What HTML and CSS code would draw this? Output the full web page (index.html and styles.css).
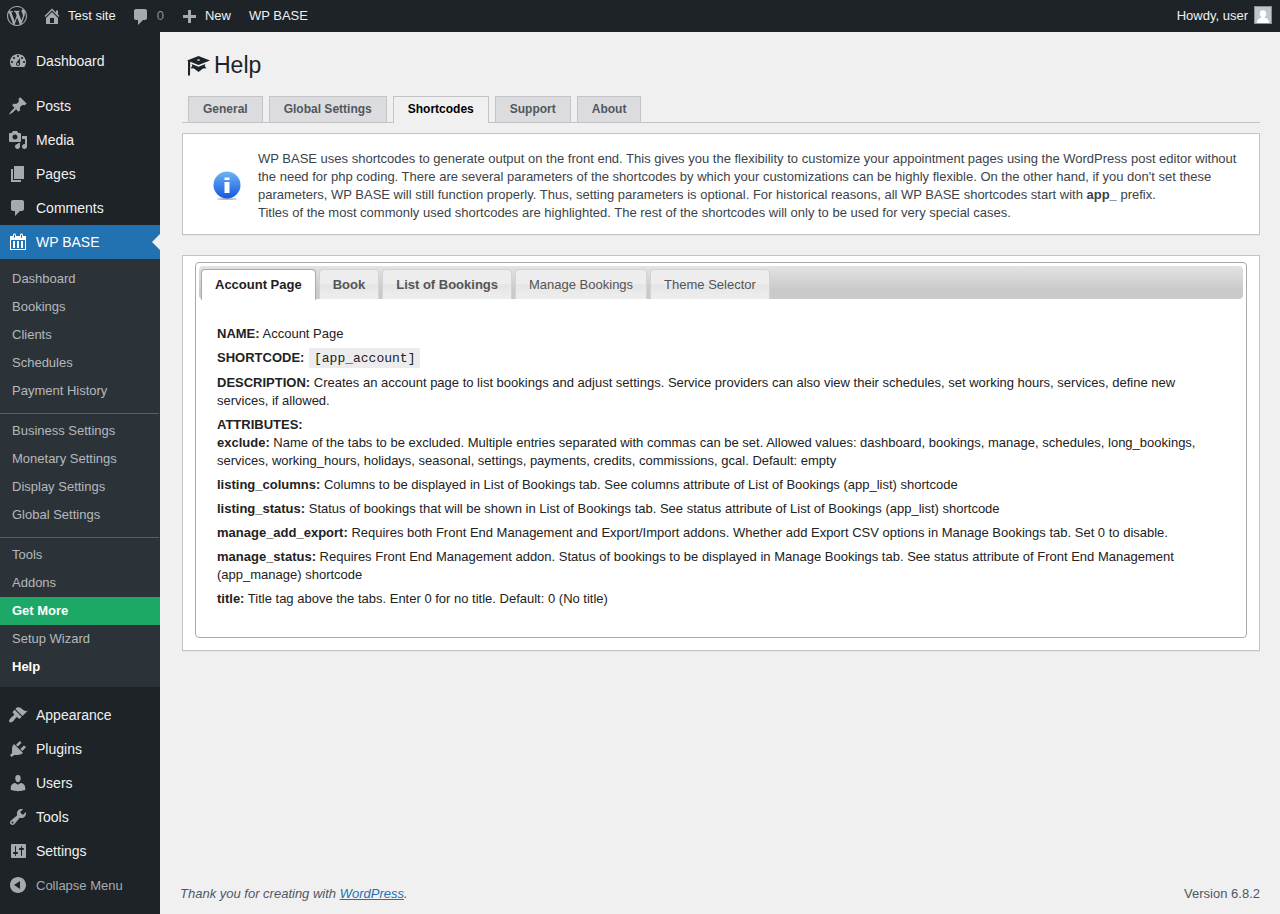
FILE: index.html
```html
<!DOCTYPE html>
<html lang="en">
<head>
<meta charset="UTF-8" />
<meta name="viewport" content="width=device-width, initial-scale=1.0"/>
<title>Help - WP BASE</title>
<link rel="stylesheet" href="styles.css">
</head>
<body>

<!-- Top admin bar -->
<header class="adminbar">
  <a href="#" class="bar-item" aria-label="About WordPress">
    <svg class="icon" viewBox="0 0 20 20"><path d="M20 10c0-5.51-4.49-10-10-10C4.48 0 0 4.49 0 10c0 5.52 4.48 10 10 10 5.51 0 10-4.48 10-10zM7.78 15.37L4.37 6.22c.55-.02 1.17-.08 1.17-.08.5-.06.44-1.13-.06-1.11 0 0-1.45.11-2.37.11-.18 0-.37 0-.58-.01C4.12 2.69 6.87 1.11 10 1.11c2.33 0 4.45.87 6.05 2.34-.68-.11-1.65.39-1.65 1.58 0 .74.45 1.36.9 2.1.35.61.55 1.36.55 2.46 0 1.49-1.4 5-1.4 5l-3.03-8.37c.54-.02.82-.17.82-.17.5-.05.44-1.25-.06-1.22 0 0-1.44.12-2.38.12-.87 0-2.33-.12-2.33-.12-.5-.03-.56 1.2-.06 1.22l.92.08 1.26 3.41zM17.41 10c.24-.64.74-1.87.43-4.25.7 1.29 1.05 2.71 1.05 4.25 0 3.29-1.73 6.24-4.4 7.78.97-2.59 1.94-5.2 2.92-7.78zM6.1 18.09C3.12 16.65 1.11 13.53 1.11 10c0-1.3.23-2.48.72-3.59C3.25 10.3 4.67 14.2 6.1 18.09zm4.03-6.63l2.58 6.98c-.86.29-1.76.45-2.71.45-.79 0-1.57-.11-2.29-.33.81-2.38 1.62-4.74 2.42-7.1z"/></svg>
  </a>
  <a href="#" class="bar-item">
    <svg class="icon" viewBox="0 0 20 20"><path d="M16 8.5l1.53 1.53-1.06 1.06L10 4.6l-6.47 6.49-1.06-1.06L10 2.5l4 4v-2h2v4zm-6-2.46l6 5.99V18H4v-5.97zM12 17v-5H8v5h4z"/></svg>
    <span>Test site</span>
  </a>
  <a href="#" class="bar-item muted">
    <svg class="icon" viewBox="0 -1 20 20"><path d="M5 2h9c1.1 0 2 .9 2 2v7c0 1.1-.9 2-2 2h-2l-5 5v-5H5c-1.1 0-2-.9-2-2V4c0-1.1.9-2 2-2z"/></svg>
    <span>0</span>
  </a>
  <a href="#" class="bar-item">
    <svg class="icon" viewBox="0 -2 20 20"><path d="M17 7v3h-5v5H9v-5H4V7h5V2h3v5h5z"/></svg>
    <span>New</span>
  </a>
  <a href="#" class="bar-item text-only">WP BASE</a>
  <a href="#" class="bar-item account">
    <span>Howdy, user</span>
    <svg class="avatar" viewBox="0 0 16 16"><rect width="16" height="16" fill="#c5c5c5"/><path fill="#fff" d="M8 3.2c2 0 3.3 1.4 3.3 3.4 0 1.5-.7 2.7-1.5 3.4v.8c2 .4 3.9 1.5 4.3 5.2H1.9c.4-3.7 2.3-4.8 4.3-5.2V10C5.4 9.3 4.7 8.1 4.7 6.6c0-2 1.3-3.4 3.3-3.4z"/></svg>
  </a>
</header>

<div class="layout">
  <!-- Admin menu -->
  <nav class="sidebar">
    <ul class="menu">
      <li><a href="#" class="menu-item"><svg class="icon" viewBox="0 0 20 20"><path d="M3.76 16h12.48c1.1-1.37 1.76-3.11 1.76-5 0-4.42-3.58-8-8-8s-8 3.58-8 8c0 1.89.66 3.63 1.76 5zM10 4c.55 0 1 .45 1 1s-.45 1-1 1-1-.45-1-1 .45-1 1-1zM6 6c.55 0 1 .45 1 1s-.45 1-1 1-1-.45-1-1 .45-1 1-1zm8 0c.55 0 1 .45 1 1s-.45 1-1 1-1-.45-1-1 .45-1 1-1zm-5.37 5.55L12 7v6c0 1.1-.9 2-2 2s-2-.9-2-2c0-.57.24-1.08.63-1.45zM4 10c.55 0 1 .45 1 1s-.45 1-1 1-1-.45-1-1 .45-1 1-1zm12 0c.55 0 1 .45 1 1s-.45 1-1 1-1-.45-1-1 .45-1 1-1zm-5 3c0-.55-.45-1-1-1s-1 .45-1 1 .45 1 1 1 1-.45 1-1z"/></svg>Dashboard</a></li>
      <li class="separator"></li>
      <li><a href="#" class="menu-item"><svg class="icon" viewBox="0 0 20 20"><path d="M10.44 3.02l1.82-1.82 6.36 6.35-1.83 1.82c-1.05-.68-2.48-.57-3.41.36l-.75.75c-.92.93-1.04 2.35-.35 3.41l-1.83 1.82-2.41-2.41-2.8 2.79c-.42.42-3.38 2.71-3.8 2.29s1.86-3.39 2.28-3.81l2.79-2.79L4.1 9.36l1.83-1.82c1.05.69 2.48.57 3.4-.36l.75-.75c.93-.92 1.05-2.35.36-3.41z"/></svg>Posts</a></li>
      <li><a href="#" class="menu-item"><svg class="icon" viewBox="0 0 20 20"><path d="M13 11V4c0-.55-.45-1-1-1h-1.67L9 1H5L3.67 3H2c-.55 0-1 .45-1 1v7c0 .55.45 1 1 1h10c.55 0 1-.45 1-1zM7 4.5c1.38 0 2.5 1.12 2.5 2.5S8.38 9.5 7 9.5 4.5 8.38 4.5 7 5.62 4.5 7 4.5zM14 6h5v10.5c0 1.38-1.12 2.5-2.5 2.5S14 17.88 14 16.5s1.12-2.5 2.5-2.5c.17 0 .34.02.5.05V9h-3V6zm-4 8.05V13h2v3.5c0 1.38-1.12 2.5-2.5 2.5S7 17.88 7 16.5 8.12 14 9.5 14c.17 0 .34.02.5.05z"/></svg>Media</a></li>
      <li><a href="#" class="menu-item"><svg class="icon" viewBox="0 0 20 20"><path d="M6 15V2h10v13H6zm-1 1h8v2H3V5h2v11z"/></svg>Pages</a></li>
      <li><a href="#" class="menu-item"><svg class="icon" viewBox="0 0 20 20"><path d="M5 2h9c1.1 0 2 .9 2 2v7c0 1.1-.9 2-2 2h-2l-5 5v-5H5c-1.1 0-2-.9-2-2V4c0-1.1.9-2 2-2z"/></svg>Comments</a></li>
      <li>
        <a href="#" class="menu-item current"><svg class="icon" viewBox="0 0 20 20"><path d="M15 4h3v14H2V4h3V3c0-.83.67-1.5 1.5-1.5S8 2.17 8 3v1h4V3c0-.83.67-1.5 1.5-1.5S15 2.17 15 3v1zM6 3v2.5c0 .28.22.5.5.5s.5-.22.5-.5V3c0-.28-.22-.5-.5-.5S6 2.72 6 3zm7 0v2.5c0 .28.22.5.5.5s.5-.22.5-.5V3c0-.28-.22-.5-.5-.5s-.5.22-.5.5zm4 14V8H3v9h14zM7 16V9H5v7h2zm4 0V9H9v7h2zm4 0V9h-2v7h2z"/></svg>WP BASE</a>
        <ul class="submenu">
          <li><a href="#">Dashboard</a></li>
          <li><a href="#">Bookings</a></li>
          <li><a href="#">Clients</a></li>
          <li><a href="#">Schedules</a></li>
          <li><a href="#">Payment History</a></li>
          <li class="divided"><a href="#">Business Settings</a></li>
          <li><a href="#">Monetary Settings</a></li>
          <li><a href="#">Display Settings</a></li>
          <li><a href="#">Global Settings</a></li>
          <li class="divided"><a href="#">Tools</a></li>
          <li><a href="#">Addons</a></li>
          <li><a href="#" class="get-more">Get More</a></li>
          <li><a href="#">Setup Wizard</a></li>
          <li><a href="#" class="active">Help</a></li>
        </ul>
      </li>
      <li class="separator"></li>
      <li><a href="#" class="menu-item"><svg class="icon" viewBox="0 0 20 20"><path d="M14.48 11.06L7.41 3.99l1.5-1.5c.5-.56 2.3-.47 3.51.32 1.21.8 1.43 1.28 2.91 2.1 1.18.64 2.45 1.26 4.45.85zm-.71.71L6.7 4.7 4.93 6.47c-.39.39-.39 1.02 0 1.41l1.06 1.06c.39.39.39 1.03 0 1.42-.6.6-1.43 1.11-2.21 1.69-.35.26-.7.53-1.01.84C1.43 14.23.4 16.08 1.4 17.07c.99 1 2.84-.03 4.18-1.36.31-.31.58-.66.85-1.02.57-.78 1.08-1.61 1.69-2.21.39-.39 1.02-.39 1.41 0l1.06 1.06c.39.39 1.02.39 1.41 0z"/></svg>Appearance</a></li>
      <li><a href="#" class="menu-item"><svg class="icon" viewBox="0 0 20 20"><path d="M13.11 4.36L9.87 7.6 8 5.73l3.24-3.24c.35-.34 1.05-.2 1.56.32.52.51.66 1.21.31 1.55zm-8 1.77l.91-1.12 9.01 9.01-1.19.84c-.71.71-2.63 1.16-3.82 1.16H6.14L4.9 17.26c-.59.59-1.54.59-2.12 0-.59-.58-.59-1.53 0-2.12l1.24-1.24v-3.88c0-1.13.4-3.19 1.09-3.89zm7.26 3.97l3.24-3.24c.34-.35 1.04-.21 1.55.31.52.51.66 1.21.31 1.55l-3.24 3.25z"/></svg>Plugins</a></li>
      <li><a href="#" class="menu-item"><svg class="icon" viewBox="0 0 20 20"><path d="M10 9.25c-2.27 0-2.73-3.44-2.73-3.44C7 4.02 7.82 2 9.97 2c2.16 0 2.98 2.02 2.71 3.81 0 0-.41 3.44-2.68 3.44zm0 2.57L12.72 10c2.39 0 4.52 2.33 4.52 4.53v2.49s-3.65 1.13-7.24 1.13c-3.65 0-7.24-1.13-7.24-1.13v-2.49c0-2.25 1.94-4.48 4.47-4.48z"/></svg>Users</a></li>
      <li><a href="#" class="menu-item"><svg class="icon" viewBox="0 0 20 20"><path d="M16.68 9.77c-1.34 1.34-3.3 1.67-4.95.99l-5.41 6.52c-.99.99-2.59.99-3.58 0s-.99-2.59 0-3.57l6.52-5.42c-.68-1.65-.35-3.61.99-4.95 1.28-1.28 3.12-1.62 4.72-1.06l-2.89 2.89 2.82 2.82 2.86-2.87c.53 1.58.18 3.39-1.08 4.65zM3.81 16.21c.4.39 1.04.39 1.43 0 .4-.4.4-1.04 0-1.43-.39-.4-1.03-.4-1.43 0-.39.39-.39 1.03 0 1.43z"/></svg>Tools</a></li>
      <li><a href="#" class="menu-item"><svg class="icon" viewBox="0 0 20 20"><path d="M18 16V4c0-.55-.45-1-1-1H4c-.55 0-1 .45-1 1v12c0 .55.45 1 1 1h13c.55 0 1-.45 1-1zM8 11h1c.55 0 1 .45 1 1s-.45 1-1 1H8v1.5c0 .28-.22.5-.5.5s-.5-.22-.5-.5V13H6c-.55 0-1-.45-1-1s.45-1 1-1h1V5.5c0-.28.22-.5.5-.5s.5.22.5.5V11zm5-2h-1c-.55 0-1-.45-1-1s.45-1 1-1h1V5.5c0-.28.22-.5.5-.5s.5.22.5.5V7h1c.55 0 1 .45 1 1s-.45 1-1 1h-1v5.5c0 .28-.22.5-.5.5s-.5-.22-.5-.5V9z"/></svg>Settings</a></li>
      <li><button type="button" class="menu-item collapse"><svg class="icon" viewBox="0 0 20 20"><path d="M10 2c4.42 0 8 3.58 8 8s-3.58 8-8 8-8-3.58-8-8 3.58-8 8-8zm2 12V6l-6 4z"/></svg>Collapse Menu</button></li>
    </ul>
  </nav>

  <div class="content">
    <main class="wrap">
      <h1 class="page-title">
        <svg class="title-icon" viewBox="0 0 23 23"><path d="M0 6.5L11.5 2 23 6.5l-11.5 4.6zM10 6a1.5.7 0 1 0 3 0 1.5.7 0 1 0-3 0z"/><path d="M1 7h2.200v4L3 21.500H1z"/><path d="M4.500 10l7 2.800 7-2.800-.8 2 1.800 2.200-3.500.3-4.500 3.500L7 14.500l-3.500-.3L5.300 12z"/></svg>
        Help
      </h1>

      <nav class="nav-tabs">
        <a href="#" class="nav-tab">General</a>
        <a href="#" class="nav-tab">Global Settings</a>
        <a href="#" class="nav-tab nav-tab-active">Shortcodes</a>
        <a href="#" class="nav-tab">Support</a>
        <a href="#" class="nav-tab">About</a>
      </nav>

      <section class="postbox info">
        <svg class="info-icon" viewBox="0 0 28 30">
          <defs>
            <linearGradient id="info-fill" x1="0" y1="0" x2="0" y2="1">
              <stop offset="0" stop-color="#6db4f5"/>
              <stop offset="1" stop-color="#1458de"/>
            </linearGradient>
          </defs>
          <ellipse cx="14" cy="28" rx="10" ry="1" fill="#bbb"/>
          <circle cx="14" cy="14" r="13.5" fill="url(#info-fill)"/>
          <path fill="#fff" d="M11.5 6.5h5V9h-5zM11.5 11h5v11h-5z"/>
        </svg>
        <div class="info-text">
          WP BASE uses shortcodes to generate output on the front end. This gives you the flexibility to customize your appointment pages using the WordPress post editor without the need for php coding. There are several parameters of the shortcodes by which your customizations can be highly flexible. On the other hand, if you don't set these parameters, WP BASE will still function properly. Thus, setting parameters is optional. For historical reasons, all WP BASE shortcodes start with <b>app_</b> prefix.<br>
          Titles of the most commonly used shortcodes are highlighted. The rest of the shortcodes will only to be used for very special cases.
        </div>
      </section>

      <section class="postbox">
        <div class="tabs-widget">
          <div class="tabs-header" role="tablist">
            <button type="button" class="tab tab-active" role="tab" aria-selected="true">Account Page</button>
            <button type="button" class="tab common" role="tab">Book</button>
            <button type="button" class="tab common" role="tab">List of Bookings</button>
            <button type="button" class="tab" role="tab">Manage Bookings</button>
            <button type="button" class="tab" role="tab">Theme Selector</button>
          </div>
          <div class="tab-panel" role="tabpanel">
            <p><b>NAME:</b> Account Page</p>
            <p><b>SHORTCODE:</b> <code>[app_account]</code></p>
            <p><b>DESCRIPTION:</b> Creates an account page to list bookings and adjust settings. Service providers can also view their schedules, set working hours, services, define new services, if allowed.</p>
            <p><b>ATTRIBUTES:</b><br>
            <b>exclude:</b> Name of the tabs to be excluded. Multiple entries separated with commas can be set. Allowed values: dashboard, bookings, manage, schedules, long_bookings, services, working_hours, holidays, seasonal, settings, payments, credits, commissions, gcal. Default: empty</p>
            <p><b>listing_columns:</b> Columns to be displayed in List of Bookings tab. See columns attribute of List of Bookings (app_list) shortcode</p>
            <p><b>listing_status:</b> Status of bookings that will be shown in List of Bookings tab. See status attribute of List of Bookings (app_list) shortcode</p>
            <p><b>manage_add_export:</b> Requires both Front End Management and Export/Import addons. Whether add Export CSV options in Manage Bookings tab. Set 0 to disable.</p>
            <p><b>manage_status:</b> Requires Front End Management addon. Status of bookings to be displayed in Manage Bookings tab. See status attribute of Front End Management (app_manage) shortcode</p>
            <p><b>title:</b> Title tag above the tabs. Enter 0 for no title. Default: 0 (No title)</p>
          </div>
        </div>
      </section>
    </main>

    <footer class="footer">
      <span class="thanks">Thank you for creating with <a href="#">WordPress</a>.</span>
      <span>Version 6.8.2</span>
    </footer>
  </div>
</div>

</body>
</html>
```

FILE: styles.css
```css
* {
  box-sizing: border-box;
}
body {
  margin: 0;
  min-height: 100vh;
  display: flex;
  flex-direction: column;
  background: #f0f0f1;
  color: #3c434a;
  font-family: "Liberation Sans", Arial, sans-serif;
  font-size: 13px;
  line-height: 18px;
}
ul {
  margin: 0;
  padding: 0;
  list-style: none;
}
.icon {
  width: 20px;
  height: 20px;
  flex: none;
  fill: #a7aaad;
  fill-rule: evenodd;
}

/* Admin bar */
.adminbar {
  display: flex;
  height: 32px;
  background: #1d2327;
}
.bar-item {
  display: flex;
  align-items: center;
  gap: 6px;
  padding: 0 8px 0 7px;
  color: #f0f0f1;
  line-height: 32px;
  text-decoration: none;
}
.bar-item.muted {
  color: #8c8f94;
}
.bar-item.text-only {
  padding-left: 10px;
}
.account {
  margin-left: auto;
}
.account .avatar {
  width: 18px;
  height: 18px;
  margin-bottom: 2px;
  border: 1px solid #8c8f94;
}

/* Sidebar */
.layout {
  display: flex;
  flex: 1;
}
.sidebar {
  width: 160px;
  flex: none;
  background: #1d2327;
}
.menu {
  padding: 12px 0;
}
.menu-item {
  display: flex;
  align-items: center;
  gap: 8px;
  width: 100%;
  height: 34px;
  padding: 0 8px;
  color: #f0f0f1;
  font-size: 14px;
  text-decoration: none;
}
.separator {
  height: 11px;
}
.current {
  position: relative;
  background: #2271b1;
  color: #fff;
}
.current .icon {
  fill: #fff;
}
.current::after {
  content: "";
  position: absolute;
  right: 0;
  top: 9px;
  border: 8px solid transparent;
  border-left-width: 0;
  border-right-color: #f0f0f1;
}
.submenu {
  padding: 6px 0;
  background: #2c3338;
}
.submenu a {
  display: block;
  padding: 5px 12px;
  color: #b4b9be;
  text-decoration: none;
}
.submenu .divided {
  margin-top: 8px;
}
.submenu .divided::before {
  content: "";
  display: block;
  height: 1px;
  margin: 0 1px 3px 0;
  background: #5b5e60;
}
.submenu .get-more {
  background: #1da867;
  color: #fff;
  font-weight: bold;
}
.submenu .active {
  color: #fff;
  font-weight: bold;
}
.collapse {
  border: 0;
  background: none;
  color: #a7aaad;
  font-family: inherit;
  font-size: 13px;
  cursor: pointer;
}

/* Main column */
.content {
  flex: 1;
  min-width: 0;
  display: flex;
  flex-direction: column;
  padding: 0 20px 11px;
}
.wrap {
  flex: 1;
  padding: 18px 0 0 2px;
}
.page-title {
  display: flex;
  align-items: center;
  gap: 4px;
  margin: 0;
  padding-left: 5px;
  color: #1d2327;
  font-size: 23px;
  font-weight: normal;
  line-height: 30px;
}
.title-icon {
  width: 23px;
  height: 23px;
  fill: #1d2327;
  fill-rule: evenodd;
}

.nav-tabs {
  display: flex;
  gap: 6px;
  margin-top: 16px;
  padding: 0 6px;
  border-bottom: 1px solid #c3c4c7;
}
.nav-tab {
  padding: 3px 14px 4px;
  border: 1px solid #c3c4c7;
  border-bottom: 0;
  background: #dcdcde;
  color: #50575e;
  font-size: 12px;
  font-weight: bold;
  text-decoration: none;
}
.nav-tab-active {
  margin-bottom: -1px;
  background: #f0f0f1;
  color: #000;
}

.postbox {
  margin: 0 0 20px;
  padding: 6px 12px 12px;
  border: 1px solid #c3c4c7;
  background: #fff;
  box-shadow: 0 1px 1px rgba(0, 0, 0, 0.04);
}
.postbox.info {
  display: flex;
  align-items: center;
  gap: 17px;
  margin-top: 10px;
  padding: 16px 20px 12px 30px;
}
.info-icon {
  width: 28px;
  height: 30px;
  flex: none;
}

/* Shortcode tabs */
.tabs-widget {
  padding: 3px;
  border: 1px solid #aaa;
  border-radius: 4px;
  color: #222;
}
.tabs-header {
  display: flex;
  gap: 3px;
  height: 33px;
  padding: 3px 2px 0;
  border-radius: 4px;
  background: linear-gradient(#e3e3e3, #c9c9c9 75%, #cbcbcb);
}
.tab {
  padding: 0 13px;
  border: 1px solid #d3d3d3;
  border-bottom: 0;
  border-radius: 4px 4px 0 0;
  background: linear-gradient(#ededed 50%, #e5e5e5 50%, #eee);
  color: #555;
  font-family: inherit;
  font-size: 13px;
  cursor: pointer;
}
.tab.common {
  font-weight: bold;
}
.tab-active {
  margin-bottom: -1px;
  padding-bottom: 1px;
  border-color: #aaa;
  background: #fff;
  color: #212121;
  font-weight: bold;
}
.tab-panel {
  padding: 26px 18px 20px;
}
.tab-panel p {
  margin: 0 0 6px;
}
code {
  padding: 3px 5px 2px;
  margin: 0 1px;
  background: #ececed;
  font-family: "Liberation Mono", monospace;
  font-size: 13px;
}

.footer {
  display: flex;
  justify-content: space-between;
  color: #50575e;
}
.thanks {
  font-style: italic;
}
.footer a {
  color: #2271b1;
}
```
